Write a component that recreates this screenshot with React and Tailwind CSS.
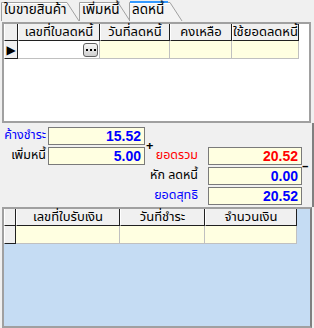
import React from 'react'

const thai = { fontFamily: 'Tahoma, "Noto Sans Thai", "Noto Sans", "DejaVu Sans", sans-serif' }

function Tab({ label, width, active, first }) {
    return (
        <div className={`relative h-[21px] shrink-0 ${first ? '' : '-ml-[1px]'}`} style={{ width }}>
            <svg className="absolute inset-0" width={width} height="21">
                <path d={`M0.5,21 L0.5,2.5 L${width - 13},2.5 L${width - 1},21`} fill={active ? '#f4f4f4' : '#f0f0f0'} stroke="#a0a0a0" strokeWidth="1" />
                <path d={`M1,3.5 L${width - 13},3.5`} stroke="#ffffff" strokeWidth="1" />
                {active && <rect x="1" y="1" width={width - 16} height="2" fill="#3399ff" />}
            </svg>
            <span className="relative block pl-[3px] pt-[2px] text-[13.5px] leading-[17px] text-black whitespace-nowrap">{label}</span>
        </div>
    )
}

function HeadCell({ children, w }) {
    return (
        <div className={`${w} h-full flex items-center justify-center bg-[#f0f0f0] border-l border-l-white border-r border-r-[#202020] border-b border-b-[#202020] text-[13px] leading-[15px] text-black whitespace-nowrap`}>
            {children}
        </div>
    )
}

function Field({ value, color }) {
    return (
        <div className="h-[18px] bg-[#ffffe1] border border-[#7a7a7a] flex items-center justify-end pr-[3px]">
            <span className={`${color} font-bold text-[14px] leading-none`} style={{ fontFamily: '"Liberation Sans", Arial, sans-serif' }}>{value}</span>
        </div>
    )
}

export default function App() {
    return (
        <div className="w-[314px] h-[328px] bg-[#f0f0f0] overflow-hidden relative" style={thai}>
            {/* tabs */}
            <div className="flex h-[21px] pl-[1px]">
                <Tab label="ใบขายสินค้า" width={79} first />
                <Tab label="เพิ่มหนี้" width={52} />
                <div className="-ml-[2px]"><Tab label="ลดหนี้" width={54} active first /></div>
            </div>

            {/* credit note grid */}
            <div className="ml-[2px] mt-[1px] w-[309px] h-[101px] border-2 border-[#a0a0a0] bg-white">
                <div className="flex h-[17px]">
                    <HeadCell w="w-[14px]" />
                    <HeadCell w="w-[82px]">เลขที่ใบลดหนี้</HeadCell>
                    <HeadCell w="w-[70px]">วันที่ลดหนี้</HeadCell>
                    <HeadCell w="w-[62px]">คงเหลือ</HeadCell>
                    <HeadCell w="w-[67px]">ใช้ยอดลดหนี้</HeadCell>
                </div>
                <div className="flex h-[18px]">
                    <div className="w-[14px] h-full flex items-center justify-center bg-[#f0f0f0] border-l border-l-white border-r border-r-[#202020] border-b border-b-[#202020] text-[12px] leading-none">▶</div>
                    <div className="w-[82px] h-full bg-white border-r border-b border-[#c0c0c0] flex items-center justify-end pr-[1px]">
                        <div className="w-[15px] h-[14px] rounded-[3px] border border-[#606060] bg-gradient-to-b from-[#f6f6f6] to-[#d0d0d0] flex items-center justify-center gap-[2px]">
                            <span className="w-[2px] h-[2px] bg-black" />
                            <span className="w-[2px] h-[2px] bg-black" />
                            <span className="w-[2px] h-[2px] bg-black" />
                        </div>
                    </div>
                    <div className="w-[70px] h-full bg-[#ffffe1] border-r border-b border-[#c0c0c0]" />
                    <div className="w-[62px] h-full bg-[#ffffe1] border-r border-b border-[#c0c0c0]" />
                    <div className="w-[67px] h-full bg-[#ffffe1] border-r border-b border-[#c0c0c0]" />
                </div>
            </div>

            {/* totals */}
            <div className="relative h-[84px] pt-[4px] border-r-2 border-r-[#808080] grid grid-cols-[46px_97px_59px_94px] gap-x-[2px] gap-y-[2px] grid-rows-[18px_18px_18px_18px] text-[12.5px]">
                <div className="flex items-center justify-end text-[#0000ff] whitespace-nowrap">ค้างชำระ</div>
                <Field value="15.52" color="text-[#0000ff]" />
                <div />
                <div />

                <div className="flex items-center justify-end text-black">เพิ่มหนี้</div>
                <Field value="5.00" color="text-[#0000ff]" />
                <div className="flex items-center justify-end pr-[8px] text-[#ff0000]">ยอดรวม</div>
                <Field value="20.52" color="text-[#ff0000]" />

                <div />
                <div />
                <div className="flex items-center justify-end pr-[8px] text-black whitespace-nowrap">หัก ลดหนี้</div>
                <Field value="0.00" color="text-[#0000ff]" />

                <div />
                <div />
                <div className="flex items-center justify-end pr-[8px] text-[#0000ff]">ยอดสุทธิ</div>
                <Field value="20.52" color="text-[#0000ff]" />

                <span className="absolute left-[146px] top-[17px] text-[13px] font-bold leading-none text-black">+</span>
                <span className="absolute left-[302px] top-[37px] text-[13px] font-bold leading-none text-black">–</span>
            </div>

            {/* payment grid */}
            <div className="ml-[2px] w-[310px] h-[121px] border-2 border-[#a0a0a0] border-r-[#808080] bg-[#c5dcf3]">
                <div className="flex h-[17px]">
                    <HeadCell w="w-[12px]" />
                    <HeadCell w="w-[104px]">เลขที่ใบรับเงิน</HeadCell>
                    <HeadCell w="w-[85px]">วันที่ชำระ</HeadCell>
                    <HeadCell w="w-[92px]">จำนวนเงิน</HeadCell>
                </div>
                <div className="flex h-[18px]">
                    <div className="w-[12px] h-full bg-[#f0f0f0] border-l border-l-white border-r border-r-[#202020] border-b border-b-[#202020]" />
                    <div className="w-[104px] h-full bg-[#ffffe1] border-r border-b border-[#c0c0c0]" />
                    <div className="w-[85px] h-full bg-[#ffffe1] border-r border-b border-[#c0c0c0]" />
                    <div className="w-[92px] h-full bg-[#ffffe1] border-r border-b border-[#c0c0c0]" />
                </div>
            </div>
        </div>
    )
}
